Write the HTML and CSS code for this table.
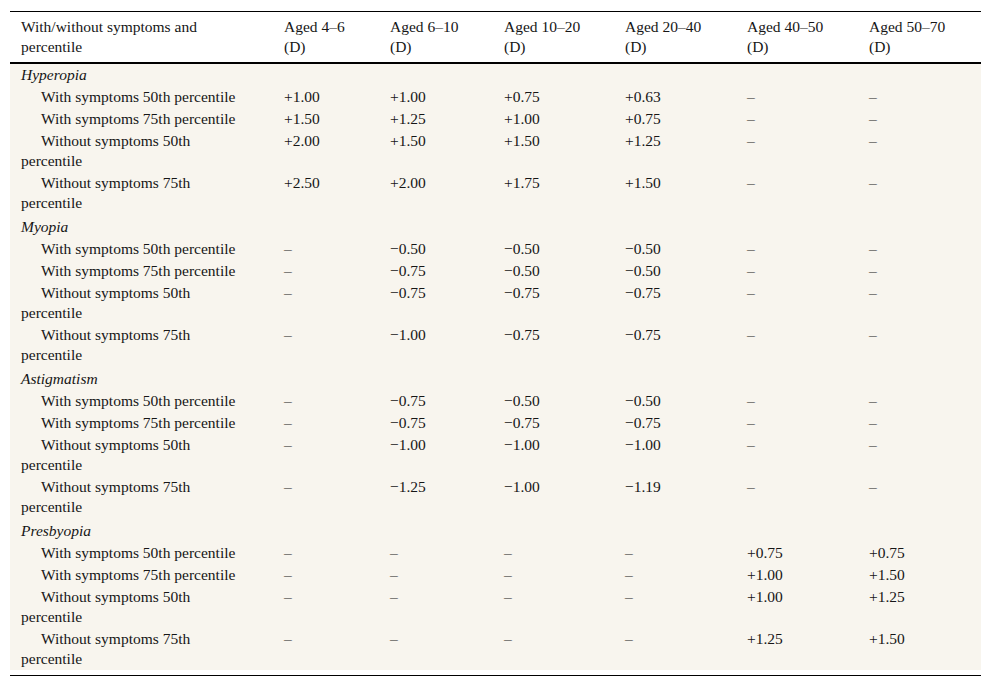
FILE: index.html
```html
<!DOCTYPE html>
<html lang="en">
<head>
<meta charset="utf-8">
<title>Refraction percentiles</title>
<link rel="stylesheet" href="styles.css">
</head>
<body>
<div class="wrap">
<div class="frame">
<table class="data">
<thead>
<tr>
<th class="c1">With/without symptoms and percentile</th>
<th class="c2">Aged 4–6 (D)</th>
<th class="c3">Aged 6–10 (D)</th>
<th class="c4">Aged 10–20 (D)</th>
<th class="c5">Aged 20–40 (D)</th>
<th class="c6">Aged 40–50 (D)</th>
<th class="c7">Aged 50–70 (D)</th>
</tr>
</thead>
<tbody>
<tr class="cat first"><td colspan="7">Hyperopia</td></tr>
<tr><td class="lbl">With symptoms 50th percentile</td><td>+1.00</td><td>+1.00</td><td>+0.75</td><td>+0.63</td><td>–</td><td>–</td></tr>
<tr><td class="lbl">With symptoms 75th percentile</td><td>+1.50</td><td>+1.25</td><td>+1.00</td><td>+0.75</td><td>–</td><td>–</td></tr>
<tr><td class="lbl">Without symptoms 50th percentile</td><td>+2.00</td><td>+1.50</td><td>+1.50</td><td>+1.25</td><td>–</td><td>–</td></tr>
<tr><td class="lbl">Without symptoms 75th percentile</td><td>+2.50</td><td>+2.00</td><td>+1.75</td><td>+1.50</td><td>–</td><td>–</td></tr>
<tr class="cat"><td colspan="7">Myopia</td></tr>
<tr><td class="lbl">With symptoms 50th percentile</td><td>–</td><td>−0.50</td><td>−0.50</td><td>−0.50</td><td>–</td><td>–</td></tr>
<tr><td class="lbl">With symptoms 75th percentile</td><td>–</td><td>−0.75</td><td>−0.50</td><td>−0.50</td><td>–</td><td>–</td></tr>
<tr><td class="lbl">Without symptoms 50th percentile</td><td>–</td><td>−0.75</td><td>−0.75</td><td>−0.75</td><td>–</td><td>–</td></tr>
<tr><td class="lbl">Without symptoms 75th percentile</td><td>–</td><td>−1.00</td><td>−0.75</td><td>−0.75</td><td>–</td><td>–</td></tr>
<tr class="cat"><td colspan="7">Astigmatism</td></tr>
<tr><td class="lbl">With symptoms 50th percentile</td><td>–</td><td>−0.75</td><td>−0.50</td><td>−0.50</td><td>–</td><td>–</td></tr>
<tr><td class="lbl">With symptoms 75th percentile</td><td>–</td><td>−0.75</td><td>−0.75</td><td>−0.75</td><td>–</td><td>–</td></tr>
<tr><td class="lbl">Without symptoms 50th percentile</td><td>–</td><td>−1.00</td><td>−1.00</td><td>−1.00</td><td>–</td><td>–</td></tr>
<tr><td class="lbl">Without symptoms 75th percentile</td><td>–</td><td>−1.25</td><td>−1.00</td><td>−1.19</td><td>–</td><td>–</td></tr>
<tr class="cat"><td colspan="7">Presbyopia</td></tr>
<tr><td class="lbl">With symptoms 50th percentile</td><td>–</td><td>–</td><td>–</td><td>–</td><td>+0.75</td><td>+0.75</td></tr>
<tr><td class="lbl">With symptoms 75th percentile</td><td>–</td><td>–</td><td>–</td><td>–</td><td>+1.00</td><td>+1.50</td></tr>
<tr><td class="lbl">Without symptoms 50th percentile</td><td>–</td><td>–</td><td>–</td><td>–</td><td>+1.00</td><td>+1.25</td></tr>
<tr><td class="lbl">Without symptoms 75th percentile</td><td>–</td><td>–</td><td>–</td><td>–</td><td>+1.25</td><td>+1.50</td></tr>
</tbody>
</table>
</div>
</div>
</body>
</html>
```
FILE: styles.css
```css
html, body {
  margin: 0;
  padding: 0;
  background: #ffffff;
}

.wrap {
  padding: 11px 11px 0 10px;
  width: 971px;
}

.frame {
  border-top: 1px solid #000000;
  border-bottom: 1px solid #000000;
  padding-bottom: 5px;
}

.data {
  width: 971px;
  table-layout: fixed;
  border-collapse: collapse;
  font-family: "Liberation Serif", "Times New Roman", serif;
  font-size: 15.5px;
  line-height: 20px;
  color: #161616;
}

.data th {
  box-sizing: border-box;
  font-weight: normal;
  text-align: left;
  vertical-align: top;
  padding: 5px 20px 5px 11px;
  border-bottom: 2px solid #000000;
}

.data .c1 { width: 263px; padding-right: 30px; }
.data .c2 { width: 106px; }
.data .c3 { width: 114px; }
.data .c4 { width: 121px; }
.data .c5 { width: 122px; }
.data .c6 { width: 122px; }
.data .c7 { width: 123px; }

.data tbody td {
  background: #f8f5ee;
  vertical-align: top;
  text-align: left;
  padding: 1px 8px 1px 11px;
}

.data tbody td.lbl {
  text-indent: 20px;
  padding-right: 30px;
}

.data tbody tr.cat td {
  font-style: italic;
  padding-top: 3px;
}

.data tbody tr.cat.first td {
  padding-top: 1px;
}
```
